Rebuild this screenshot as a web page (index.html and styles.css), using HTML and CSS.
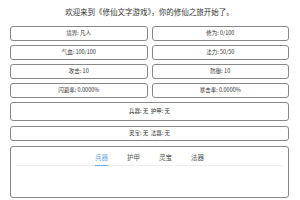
FILE: index.html
```html
<!DOCTYPE html>
<html lang="zh">
  <head>
    <meta charset="UTF-8" />
    <title>修仙文字游戏</title>
    <link rel="stylesheet" href="styles.css">
  </head>
  <body>
    <div class="game">
      <h1 class="title">欢迎来到《修仙文字游戏》，你的修仙之旅开始了。</h1>
      <div class="stats">
        <div class="stat">境界: 凡人</div>
        <div class="stat">修为: 0/100</div>
        <div class="stat">气血: 100/100</div>
        <div class="stat">法力: 50/50</div>
        <div class="stat">攻击: 10</div>
        <div class="stat">防御: 10</div>
        <div class="stat">闪避率: 0.0000%</div>
        <div class="stat">暴击率: 0.0000%</div>
        <div class="stat wide tall">兵器: 无&nbsp;&nbsp;护甲: 无</div>
        <div class="stat wide">灵宝: 无&nbsp;&nbsp;法器: 无</div>
      </div>
      <div class="panel">
        <div class="tabs">
          <span class="tab active">兵器</span>
          <span class="tab">护甲</span>
          <span class="tab">灵宝</span>
          <span class="tab">法器</span>
        </div>
      </div>
    </div>
  </body>
</html>
```

FILE: styles.css
```css
body {
  margin: 0;
  font-family: "Noto Sans CJK SC", "Noto Sans", sans-serif;
  color: #333;
}

.game {
  padding: 0 11px 0 10px;
}

.title {
  margin: 0;
  height: 26px;
  line-height: 24px;
  font-size: 7.5px;
  font-weight: normal;
  text-align: center;
}

.stats {
  display: grid;
  grid-template-columns: 1fr 1fr;
  gap: 4px;
}

.stat {
  height: 13px;
  line-height: 13px;
  border: 1px solid #888;
  border-radius: 3px;
  font-size: 5.5px;
  text-align: center;
}

.wide {
  grid-column: span 2;
}

.tall {
  height: 17px;
  line-height: 17px;
  margin-bottom: 1px;
}

.panel {
  margin-top: 5px;
  height: 50px;
  border: 1px solid #888;
  border-radius: 3px;
  padding: 0 5px;
}

.tabs {
  display: flex;
  justify-content: center;
  gap: 19px;
  border-bottom: 1px solid #eee;
  margin-top: 4px;
}

.tab {
  font-size: 6.5px;
  color: #555;
  padding: 1px 0 3px;
}

.active {
  color: #6aaaf0;
  border-bottom: 1px solid #6aaaf0;
  margin-bottom: -1px;
}
```
